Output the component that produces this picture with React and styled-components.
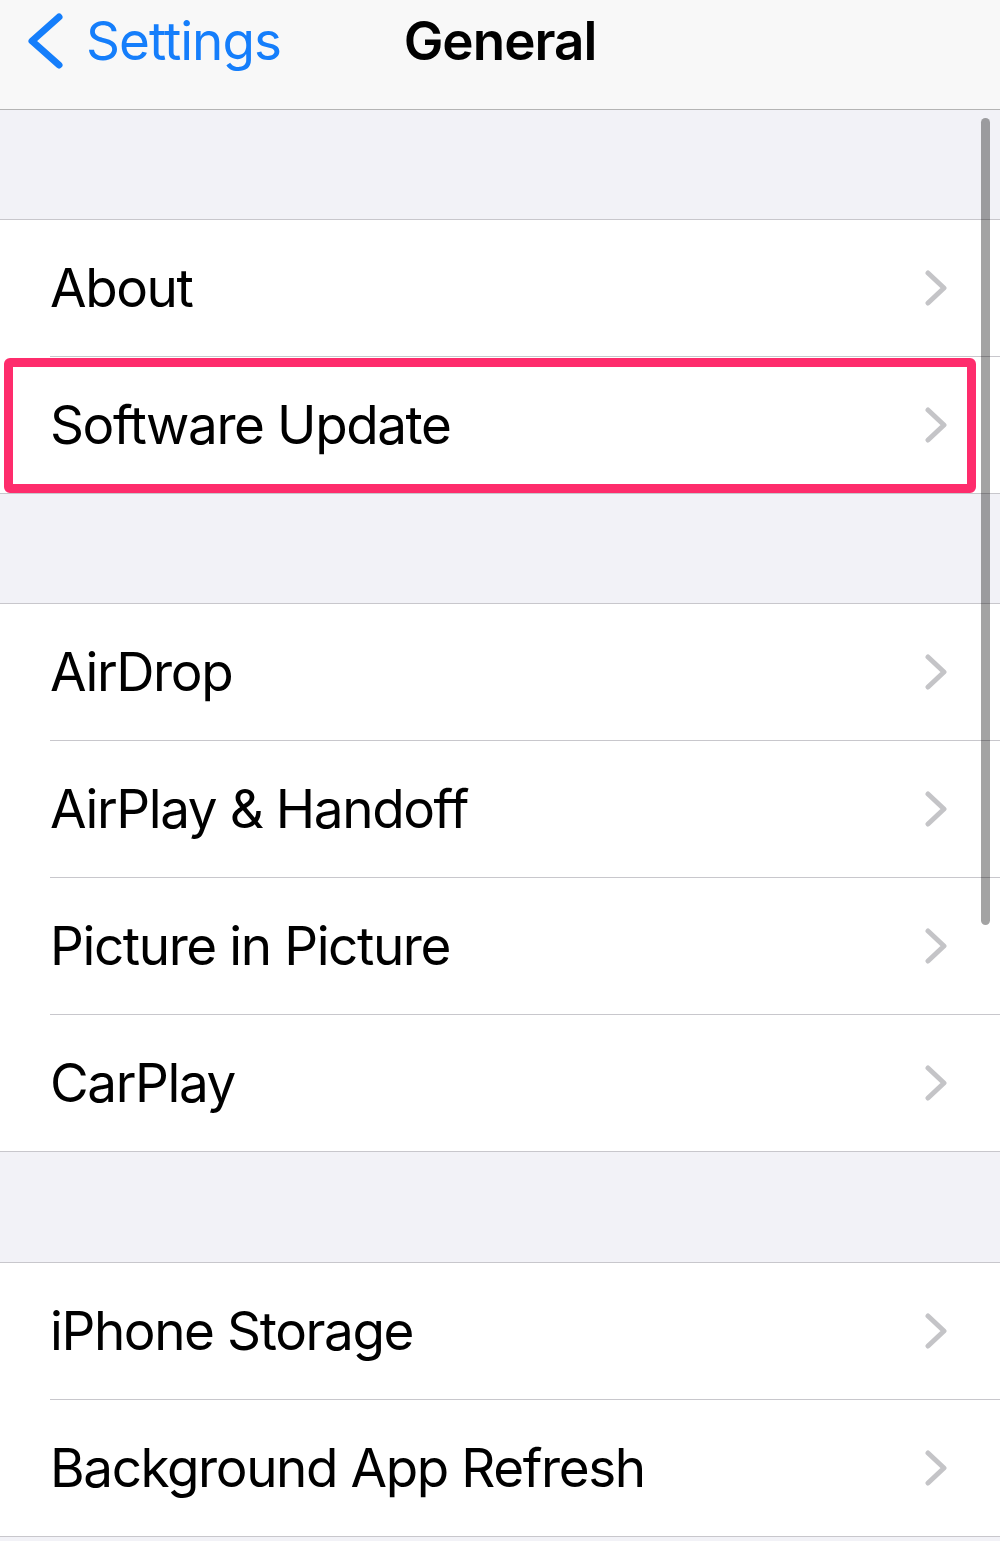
import React from 'react';
import styled, { createGlobalStyle } from 'styled-components';

const GlobalStyle = createGlobalStyle`
  html, body {
    margin: 0;
    padding: 0;
    background: #f2f2f7;
  }
  body {
    font-family: Inter, "Liberation Sans", Arial, sans-serif;
    -webkit-font-smoothing: antialiased;
  }
`;

const Screen = styled.div`
  position: relative;
  width: 1000px;
  min-height: 1541px;
  background: #f2f2f7;
  overflow: hidden;
`;

const NavBar = styled.header`
  height: 109px;
  background: #f8f8f8;
  border-bottom: 1px solid #b4b4b4;
`;

const NavRow = styled.div`
  display: grid;
  grid-template-columns: 1fr auto 1fr;
  align-items: center;
  height: 82px;
`;

const BackButton = styled.div`
  display: flex;
  align-items: center;
  gap: 22px;
  padding-left: 24px;
  color: #157efb;
  font-size: 53px;
  letter-spacing: -1px;
`;

const NavTitle = styled.h1`
  margin: 0;
  font-size: 53px;
  font-weight: 600;
  letter-spacing: -1px;
  color: #000;
`;

const SectionGap = styled.div`
  height: ${(p) => p.$h}px;
`;

const Group = styled.section`
  background: #fff;
  border-top: 1px solid #c8c7cc;
  border-bottom: 1px solid #c8c7cc;
`;

const Row = styled.div`
  position: relative;
  padding-left: 50px;
  background: #fff;
`;

const RowBody = styled.div`
  display: flex;
  align-items: center;
  justify-content: space-between;
  height: 136px;
  padding-right: 53px;
  border-bottom: ${(p) => (p.$last ? 'none' : '1px solid #c8c7cc')};
`;

const Label = styled.span`
  font-size: 53px;
  color: #000;
  letter-spacing: -1.4px;
`;

const Highlight = styled.div`
  position: absolute;
  top: 1px;
  left: 4px;
  right: 24px;
  bottom: 0;
  border: 9px solid #fe2c6c;
  border-radius: 6px;
  pointer-events: none;
`;

const ScrollThumb = styled.div`
  position: absolute;
  top: 118px;
  left: 981px;
  width: 9px;
  height: 807px;
  border-radius: 5px;
  background: rgba(0, 0, 0, 0.36);
`;

const BackChevron = () => (
  <svg width="40" height="58" viewBox="0 0 40 58" aria-hidden="true">
    <path
      d="M35 5 L8 29 L35 53"
      fill="none"
      stroke="#157efb"
      strokeWidth="7"
      strokeLinecap="round"
      strokeLinejoin="round"
    />
  </svg>
);

const Chevron = () => (
  <svg width="22" height="36" viewBox="0 0 22 36" aria-hidden="true">
    <path
      d="M3 3 L19 18 L3 33"
      fill="none"
      stroke="#c4c4c7"
      strokeWidth="5"
      strokeLinecap="round"
      strokeLinejoin="round"
    />
  </svg>
);

const sections = [
  { gap: 109, items: [{ label: 'About' }, { label: 'Software Update', marked: true }] },
  {
    gap: 109,
    items: [
      { label: 'AirDrop' },
      { label: 'AirPlay & Handoff' },
      { label: 'Picture in Picture' },
      { label: 'CarPlay' },
    ],
  },
  { gap: 110, items: [{ label: 'iPhone Storage' }, { label: 'Background App Refresh' }] },
];

export default function App() {
  return (
    <Screen>
      <GlobalStyle />
      <NavBar>
        <NavRow>
          <BackButton>
            <BackChevron />
            <span>Settings</span>
          </BackButton>
          <NavTitle>General</NavTitle>
          <div />
        </NavRow>
      </NavBar>
      {sections.map((section, si) => (
        <React.Fragment key={si}>
          <SectionGap $h={section.gap} />
          <Group>
            {section.items.map((item, i) => (
              <Row key={item.label}>
                <RowBody $last={i === section.items.length - 1}>
                  <Label>{item.label}</Label>
                  <Chevron />
                </RowBody>
                {item.marked && <Highlight />}
              </Row>
            ))}
          </Group>
        </React.Fragment>
      ))}
      <ScrollThumb />
    </Screen>
  );
}
